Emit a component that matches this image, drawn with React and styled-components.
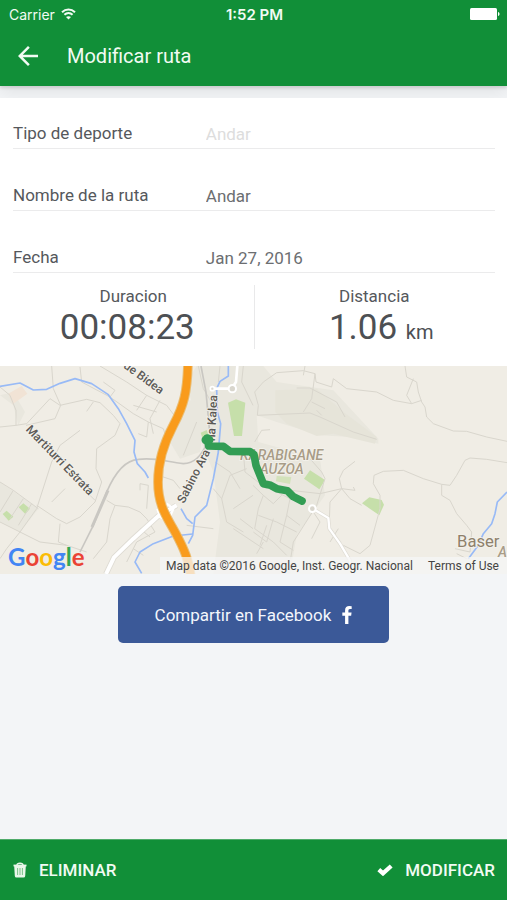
import React, { useState } from 'react'
import styled, { createGlobalStyle } from 'styled-components'
import { MdArrowBack } from 'react-icons/md'

const WifiIcon = () => (
  <svg width="15" height="12" viewBox="0 0 15 12" fill="none" stroke="#f2fbf3" aria-hidden="true">
    <path d="M1 4.2C4.8 0.5 10.2 0.5 14 4.2" strokeWidth="2" />
    <path d="M3.4 6.8C5.8 4.5 9.2 4.5 11.6 6.8" strokeWidth="2" />
    <path d="M7.5 11.6L5 9.1C6.4 7.8 8.6 7.8 10 9.1Z" fill="#f2fbf3" stroke="none" />
  </svg>
)

const BatteryIcon = () => (
  <svg width="30" height="12" viewBox="0 0 30 12" fill="#ffffff" aria-hidden="true">
    <rect x="0" y="0" width="27" height="12" rx="1.5" />
    <path d="M28 4C30 4.4 30 7.6 28 8Z" />
  </svg>
)

const FacebookIcon = () => (
  <svg width="10" height="18" viewBox="95 0 864 1664" fill="#ffffff" aria-hidden="true">
    <path d="M959 12v264h-157q-86 0-116 36t-30 108v189h293l-39 296h-254v759h-306v-759h-255v-296h255v-218q0-186 104-288.500t277-102.500q147 0 228 12z" />
  </svg>
)

const TrashIcon = () => (
  <svg width="14" height="16" viewBox="0 0 14 16" aria-hidden="true">
    <path d="M4 3C4 0.6 10 0.6 10 3" fill="none" stroke="#e9f7ea" strokeWidth="1.4" />
    <path d="M0.5 2.6H13.5V4.4H0.5Z" fill="#e9f7ea" />
    <path d="M1.2 4H12.8L12.2 14Q12 15.5 10.6 15.5H3.4Q2 15.5 1.8 14Z" fill="#e9f7ea" />
    <path d="M4.6 6V13M7 6V13M9.4 6V13" stroke="#7cc389" strokeWidth="1" />
  </svg>
)

const CheckIcon = () => (
  <svg width="16" height="12" viewBox="0 0 16 12" aria-hidden="true">
    <path d="M1.8 5.6L6 9.4L14.2 2" fill="none" stroke="#ffffff" strokeWidth="4.2" />
  </svg>
)

// drawn at three units per pixel
const MapDrawing = () => (
  <MapSvg viewBox="0 12 1521 624" preserveAspectRatio="xMidYMid slice" aria-hidden="true">
    <rect x="0" y="12" width="1521" height="624" fill="#f0ede5" />

    {/* built-up areas */}
    <g fill="#e9e7de">
      <path d="M590 12H790L830 60L1000 85L1135 230V245L1050 225L960 220L830 180L770 160L775 240L960 290L975 400L890 520L870 636H640L660 480L640 330L600 230L560 60Z" />
      <path d="M0 360L115 440L60 510L0 480Z" />
      <path d="M555 110L620 130L600 270L540 290L510 240Z" />
      <path d="M0 100L40 90L75 150L55 190L40 130Z" />
    </g>
    <path d="M826 85L950 80L1030 150L1130 225L1125 245L1000 215L950 222L860 185L826 150Z" fill="#e6e4d9" />
    <path d="M25 95L65 72L82 95L38 127Z" fill="#f1e3d5" />
    <g fill="#c6dfaa">
      <path d="M684 122L708 112L736 122L726 222H702Z" />
      <path d="M56 436L70 424L90 440L76 456Z" />
      <path d="M8 456L20 446L40 464L26 476Z" />
      <path d="M602 212L620 204L630 230L608 232Z" />
      <path d="M830 342L874 345L870 366L828 358Z" fill="#d3e2bb" />
      <path d="M930 325L975 354L958 382L912 350Z" />
      <path d="M1086 424L1108 406L1145 414L1152 428L1138 460Z" />
    </g>

    {/* minor streets */}
    <g fill="none" stroke="#d9d6cd" strokeWidth="3" strokeLinejoin="round">
      <path d="M0 75L30 100L48 145V190L0 195" />
      <path d="M48 190L80 185L150 110L180 130L260 112L300 122L340 160L360 185L345 220L290 260L288 320L305 360L285 420L240 465L200 485L170 470L110 430" />
      <path d="M155 12L160 80L182 130L165 170L78 190" />
      <path d="M260 148L280 120M180 485L175 540L200 550M285 415L270 400" />
      <path d="M240 205L180 250L155 300L110 440L60 510M195 380L155 420" />
      <path d="M0 360L40 385L115 440M40 385L0 450M0 480L60 510L120 540L200 550L260 570M70 410L30 470M95 425L55 490M60 510L20 560L0 590" />
      <path d="M240 15L245 60L330 105L400 155L445 180L490 200L500 230M300 12L380 60L440 100L500 130L530 170M330 105L345 85L310 60M440 100L410 145M480 115L450 170L460 215M445 180L440 225L415 215M400 130L470 150" />
      <path d="M330 470L345 430L385 435L420 450L440 470M345 430L320 415M420 385V365L445 370L440 440M330 470L320 540L280 590M475 340L520 355L540 380M440 470L465 510L410 540L380 600M420 500L450 525M400 560L430 580" />
      <path d="M595 12L610 80L640 130M660 12L655 60M730 12L725 60L759 130M590 180L550 280M645 300L690 330L720 380M665 410L690 340L740 320M640 500L560 490M640 380L665 410L680 480L730 510M730 270L735 330L800 380M700 440L759 400M720 470L759 500M700 500L790 560" />
      <path d="M764 90L790 60L830 32L910 26L945 35L948 60L995 75L1000 50L1040 80L1130 90L1180 115L1235 125M764 90L775 130L772 160L930 153L960 165L1060 210L1130 232M945 35L935 110L910 150M890 78L930 78L1010 120L1035 165M950 145L965 160M935 120L975 140M764 240L785 205L810 203M915 12L910 40" />
      <path d="M1215 12L1220 45L1250 60L1255 90L1265 120L1275 135L1280 165L1300 185L1360 207L1400 208L1460 225L1521 238M1240 50L1220 100L1235 125L1265 115" />
      <path d="M1521 302L1460 292L1410 288L1395 295L1370 340L1350 370L1325 367L1270 350L1210 325L1150 328L1122 340L1120 365L1140 400L1140 440L1110 550L1080 575L1030 550M1325 367V400L1350 415L1370 455L1400 490L1415 510L1410 570L1365 560M1400 590L1370 575" />
      <path d="M1065 298L1030 325L1018 350L1025 380L1050 410L1085 430M1025 380L1065 385L1060 375M1025 380L990 420L988 480M1025 380L960 395L830 380M975 350L965 330L930 290M975 350L950 430L880 540L872 590M940 450L960 480L935 530M1015 500L990 540" />
      <path d="M759 370L790 400L775 440L764 500M790 400L820 425L845 400M775 460L830 480L890 510M820 470L800 540L760 510M860 460L840 540L880 565M764 500L820 540L860 580M800 490L780 550M790 540L770 575M810 380L870 410L860 460L900 490" />
    </g>

    {/* railway */}
    <g fill="none" stroke="#c9c7c2">
      <path d="M240 570L280 490L320 390C350 320 380 294 415 292C470 285 500 300 550 305C590 305 610 270 622 240" strokeWidth="5" />
      <path d="M276 495L324 385" strokeWidth="9" />
      <path d="M603 12L618 90L628 200" strokeWidth="5" />
    </g>

    {/* rivers */}
    <g fill="none" stroke="#98baf6" strokeWidth="5" strokeLinejoin="round">
      <path d="M0 73L60 63L100 84L140 82L180 64L225 50L275 65L325 98L355 140L380 185L405 235L402 270L412 305L435 330L445 348" />
      <path d="M685 12V42L660 58L650 80L652 150L662 185L655 270L640 350L620 430L585 465L578 520L565 545" />
      <path d="M543 440L560 470L578 485M578 516L520 522L460 545L420 570L405 600L425 634" />
      <path d="M1521 390L1492 420L1485 455L1475 485L1450 515L1435 550L1405 590" />
    </g>

    {/* secondary roads */}
    <g fill="none" stroke="#dedbd3" strokeWidth="17">
      <path d="M318 636L342 586L400 530L475 462L530 430" />
    </g>
    <g fill="none" stroke="#ffffff" strokeWidth="12" strokeLinejoin="round">
      <path d="M318 636L342 586L400 530L475 462L530 430" />
      <path d="M472 440L480 465L505 475L520 440L500 425" strokeWidth="7" />
      <path d="M640 80H685M712 12L708 60L700 72" strokeWidth="8" />
      <circle cx="697" cy="80" r="11" fill="#d9d6cd" strokeWidth="6" />
      <circle cx="637" cy="80" r="6" fill="#d9d6cd" strokeWidth="5" />
      <path d="M945 444L985 468L988 500L1020 545L1048 592L1060 636" strokeWidth="11" stroke="#dedbd3" />
      <path d="M945 444L985 468L988 500L1020 545L1048 592L1060 636" strokeWidth="7" />
      <circle cx="937" cy="440" r="10" fill="#d9d6cd" strokeWidth="6" />
    </g>

    {/* motorway */}
    <g fill="none">
      <path d="M564 0C562 90 552 130 520 190C488 250 474 300 474 360C474 430 500 465 525 510C555 565 568 600 573 648" stroke="#e9bd74" strokeWidth="29" />
      <path d="M564 0C562 90 552 130 520 190C488 250 474 300 474 360C474 430 500 465 525 510C555 565 568 600 573 648" stroke="#f99b1c" strokeWidth="23" />
    </g>

    <StreetLabel transform="translate(76 204) rotate(46)">Martiturri Estrata</StreetLabel>
    <StreetLabel transform="translate(368 16) rotate(36)">de Bidea</StreetLabel>
    <StreetLabel transform="translate(552 426) rotate(-63)">Sabino Ara</StreetLabel>
    <StreetLabel transform="translate(645 238) rotate(-87)">na Kalea</StreetLabel>
    <AreaLabel x="845" y="295" textAnchor="middle">KARABIGANE</AreaLabel>
    <AreaLabel x="845" y="335" textAnchor="middle">AUZOA</AreaLabel>
    <TownLabel x="1371" y="554">Baser</TownLabel>
    <AreaLabel x="1494" y="586">A</AreaLabel>

    {/* recorded route */}
    <g fill="none" stroke="#329d54" strokeLinecap="round" strokeLinejoin="round">
      <path d="M622 228L626 252L670 253L690 268L750 269L762 278L768 310L790 365L812 370L830 380L862 386L880 404L906 417" strokeWidth="23" />
      <path d="M617 234H628" strokeWidth="25" />
    </g>
  </MapSvg>
)

const App = () => {
  const [name, setName] = useState('Andar')

  return (
    <Page>
      <GlobalStyle />
      <Header>
        <StatusBar>
          <Carrier>Carrier <WifiIcon /></Carrier>
          <Clock>1:52 PM</Clock>
          <Battery><BatteryIcon /></Battery>
        </StatusBar>
        <Toolbar>
          <BackButton type="button" aria-label="Volver"><MdArrowBack size={30} /></BackButton>
          <Title>Modificar ruta</Title>
        </Toolbar>
      </Header>

      <Card>
        <FieldList>
          <Field>
            <FieldLabel htmlFor="sport">Tipo de deporte</FieldLabel>
            <FieldSelect id="sport" disabled defaultValue="Andar">
              <option>Andar</option>
            </FieldSelect>
          </Field>
          <Field>
            <FieldLabel htmlFor="name">Nombre de la ruta</FieldLabel>
            <FieldInput id="name" type="text" value={name} onChange={(e) => setName(e.target.value)} />
          </Field>
          <Field>
            <FieldLabel htmlFor="date">Fecha</FieldLabel>
            <FieldInput id="date" type="text" defaultValue="Jan 27, 2016" />
          </Field>
        </FieldList>
        <Stats>
          <Stat>
            <StatLabel>Duracion</StatLabel>
            <StatValue>00:08:23</StatValue>
          </Stat>
          <Stat>
            <StatLabel>Distancia</StatLabel>
            <StatValue $last>1.06 <StatUnit>km</StatUnit></StatValue>
          </Stat>
        </Stats>
      </Card>

      <MapBox>
        <MapDrawing />
        <GoogleMark>
          <Letter $color="#4285f4">G</Letter>
          <Letter $color="#ea4335">o</Letter>
          <Letter $color="#fbbc05">o</Letter>
          <Letter $color="#4285f4">g</Letter>
          <Letter $color="#34a853">l</Letter>
          <Letter $color="#ea4335">e</Letter>
        </GoogleMark>
        <Attribution>
          <span>Map data ©2016 Google, Inst. Geogr. Nacional</span>
          <TermsLink href="#terms">Terms of Use</TermsLink>
        </Attribution>
      </MapBox>

      <ShareBox>
        <ShareButton type="button">Compartir en Facebook <FacebookIcon /></ShareButton>
      </ShareBox>

      <Footer>
        <FooterButton type="button"><TrashIcon />ELIMINAR</FooterButton>
        <FooterButton type="button"><CheckIcon />MODIFICAR</FooterButton>
      </Footer>
    </Page>
  )
}

export default App

const GlobalStyle = createGlobalStyle`
  * {
    box-sizing: border-box;
  }
  body {
    margin: 0;
    background-color: #f3f5f7;
  }
  button, input, select {
    font-family: inherit;
    margin: 0;
    padding: 0;
    border: none;
    background: none;
  }
`;

const Page = styled.div`
  min-height: 100vh;
  display: flex;
  flex-direction: column;
  font-family: Roboto, "Liberation Sans", sans-serif;
  color: #55585c;
`;

const Header = styled.header`
  padding-bottom: 2px;
  background-color: #118f38;
  color: #f2fbf3;
  box-shadow: 0 2px 3px rgba(0, 0, 0, 0.12), 0 6px 16px rgba(0, 0, 0, 0.08);
`;

const StatusBar = styled.div`
  height: 28px;
  padding: 0 7px 0 9px;
  display: grid;
  grid-template-columns: 1fr auto 1fr;
  align-items: center;
  font-family: Inter, "Liberation Sans", sans-serif;
  font-size: 14px;
`;

const Carrier = styled.span`
  display: flex;
  align-items: center;
  gap: 6px;
`;

const Clock = styled.span`
  font-size: 15px;
  font-weight: 600;
`;

const Battery = styled.span`
  display: flex;
  justify-content: flex-end;
`;

const Toolbar = styled.div`
  height: 56px;
  padding: 0 13px;
  display: flex;
  align-items: center;
  gap: 24px;
`;

const BackButton = styled.button`
  display: flex;
  color: #f2fbf3;
`;

const Title = styled.h1`
  margin: 0;
  font-size: 20px;
  font-weight: 400;
  line-height: 24px;
`;

const Card = styled.main`
  margin-top: 12px;
  background-color: #ffffff;
`;

const FieldList = styled.div`
  padding: 0 12px 0 13px;
  display: grid;
  gap: 11px;
`;

const Field = styled.div`
  height: 51px;
  padding-top: 20px;
  display: grid;
  grid-template-columns: 2fr 3fr;
  align-items: center;
  border-bottom: 1px solid #ebebec;
`;

const FieldLabel = styled.label`
  font-size: 17px;
  line-height: 30px;
`;

const FieldInput = styled.input`
  width: 100%;
  height: 30px;
  padding-top: 2px;
  font-size: 17px;
  color: #6c6e71;
`;

const FieldSelect = styled.select`
  width: 100%;
  height: 30px;
  padding-top: 2px;
  appearance: none;
  font-size: 17px;
  color: #dddddd;
  opacity: 1;
`;

const Stats = styled.div`
  padding: 12px 13px 17px;
  display: grid;
  grid-template-columns: 1fr 1fr;
`;

const Stat = styled.div`
  height: 64px;
  text-align: center;
  & + & {
    border-left: 1px solid #e9e9ea;
  }
`;

const StatLabel = styled.div`
  font-size: 17px;
  line-height: 22px;
`;

const StatValue = styled.div`
  padding: ${({ $last }) => ($last ? '0 0 0 14px' : '0 12px 0 0')};
  font-size: 35px;
  line-height: 42px;
  color: #4d5054;
`;

const StatUnit = styled.span`
  font-size: 20px;
`;

const MapBox = styled.section`
  height: 208px;
  position: relative;
  overflow: hidden;
`;

const MapSvg = styled.svg`
  display: block;
  width: 100%;
  height: 100%;
`;

const StreetLabel = styled.text`
  font-size: 36px;
  font-weight: 500;
  fill: #5c5a57;
  stroke: #f4f2ec;
  stroke-width: 5px;
  paint-order: stroke;
`;

const AreaLabel = styled.text`
  font-size: 42px;
  font-style: italic;
  font-weight: 500;
  fill: #a89c87;
  stroke: #f4f2ec;
  stroke-width: 5px;
  paint-order: stroke;
`;

const TownLabel = styled.text`
  font-size: 50px;
  fill: #8e806b;
  stroke: #f4f2ec;
  stroke-width: 5px;
  paint-order: stroke;
`;

const GoogleMark = styled.div`
  position: absolute;
  left: 8px;
  bottom: 2px;
  display: flex;
  font-family: Lato, sans-serif;
  font-size: 24px;
  font-weight: 700;
  line-height: 30px;
`;

const Letter = styled.span`
  color: ${({ $color }) => $color};
`;

const Attribution = styled.div`
  position: absolute;
  right: 0;
  bottom: 0;
  padding: 1px 8px 0 6px;
  display: flex;
  gap: 15px;
  font-size: 12px;
  line-height: 16px;
  white-space: nowrap;
  color: #444444;
  background-color: rgba(245, 245, 245, 0.75);
`;

const TermsLink = styled.a`
  color: inherit;
  text-decoration: none;
`;

const ShareBox = styled.div`
  padding: 12px;
  display: flex;
  justify-content: center;
`;

const ShareButton = styled.button`
  height: 57px;
  padding: 0 37px;
  display: flex;
  align-items: center;
  gap: 11px;
  border-radius: 5px;
  background-color: #3b5998;
  color: #f3f6fc;
  font-size: 17px;
`;

const Footer = styled.footer`
  height: 61px;
  margin-top: auto;
  padding: 0 12px 0 13px;
  display: flex;
  justify-content: space-between;
  align-items: center;
  background-color: #118f38;
  border-top: 1px solid #4fab6a;
`;

const FooterButton = styled.button`
  height: 100%;
  display: flex;
  align-items: center;
  gap: 12px;
  color: #f2fbf3;
  font-size: 17px;
  font-weight: 500;
`;
